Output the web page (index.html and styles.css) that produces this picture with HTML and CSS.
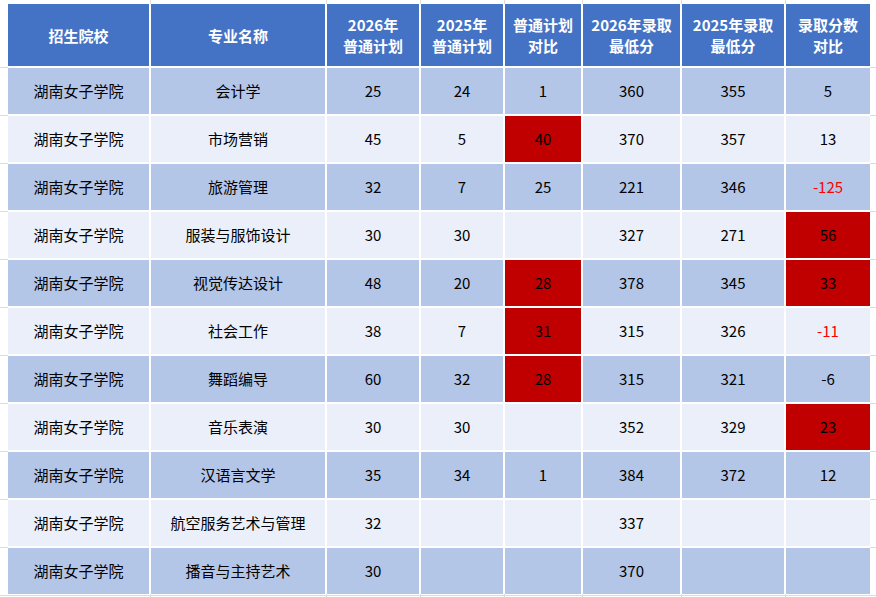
FILE: index.html
```html
<!DOCTYPE html>
<html lang="zh-CN">
<head>
<meta charset="utf-8">
<title>招生计划对比</title>
<link rel="stylesheet" href="styles.css">
</head>
<body>
<div class="sheet">
  <div class="grid">
    <div class="th">招生院校</div>
    <div class="th">专业名称</div>
    <div class="th">2026年<br>普通计划</div>
    <div class="th">2025年<br>普通计划</div>
    <div class="th">普通计划<br>对比</div>
    <div class="th">2026年录取<br>最低分</div>
    <div class="th">2025年录取<br>最低分</div>
    <div class="th">录取分数<br>对比</div>

    <div class="td d">湖南女子学院</div><div class="td d">会计学</div><div class="td d">25</div><div class="td d">24</div><div class="td d">1</div><div class="td d">360</div><div class="td d">355</div><div class="td d">5</div>

    <div class="td l">湖南女子学院</div><div class="td l">市场营销</div><div class="td l">45</div><div class="td l">5</div><div class="td r">40</div><div class="td l">370</div><div class="td l">357</div><div class="td l">13</div>

    <div class="td d">湖南女子学院</div><div class="td d">旅游管理</div><div class="td d">32</div><div class="td d">7</div><div class="td d">25</div><div class="td d">221</div><div class="td d">346</div><div class="td d neg">-125</div>

    <div class="td l">湖南女子学院</div><div class="td l">服装与服饰设计</div><div class="td l">30</div><div class="td l">30</div><div class="td l"></div><div class="td l">327</div><div class="td l">271</div><div class="td r">56</div>

    <div class="td d">湖南女子学院</div><div class="td d">视觉传达设计</div><div class="td d">48</div><div class="td d">20</div><div class="td r">28</div><div class="td d">378</div><div class="td d">345</div><div class="td r">33</div>

    <div class="td l">湖南女子学院</div><div class="td l">社会工作</div><div class="td l">38</div><div class="td l">7</div><div class="td r">31</div><div class="td l">315</div><div class="td l">326</div><div class="td l neg">-11</div>

    <div class="td d">湖南女子学院</div><div class="td d">舞蹈编导</div><div class="td d">60</div><div class="td d">32</div><div class="td r">28</div><div class="td d">315</div><div class="td d">321</div><div class="td d">-6</div>

    <div class="td l">湖南女子学院</div><div class="td l">音乐表演</div><div class="td l">30</div><div class="td l">30</div><div class="td l"></div><div class="td l">352</div><div class="td l">329</div><div class="td r">23</div>

    <div class="td d">湖南女子学院</div><div class="td d">汉语言文学</div><div class="td d">35</div><div class="td d">34</div><div class="td d">1</div><div class="td d">384</div><div class="td d">372</div><div class="td d">12</div>

    <div class="td l">湖南女子学院</div><div class="td l">航空服务艺术与管理</div><div class="td l">32</div><div class="td l"></div><div class="td l"></div><div class="td l">337</div><div class="td l"></div><div class="td l"></div>

    <div class="td d">湖南女子学院</div><div class="td d">播音与主持艺术</div><div class="td d">30</div><div class="td d"></div><div class="td d"></div><div class="td d">370</div><div class="td d"></div><div class="td d"></div>
  </div>
</div>
</body>
</html>
```

FILE: styles.css
```css
html, body {
  margin: 0;
  padding: 0;
  background: #ffffff;
}

.sheet {
  width: 876px;
  height: 597px;
  box-sizing: border-box;
  padding: 4px 6px 0 8px;
  overflow: hidden;
  background-color: #ffffff;
  background-image:
    linear-gradient(to right,
      transparent 150px, #dcdcdc 150px 151px, transparent 151px 326px,
      #dcdcdc 326px 327px, transparent 327px 420px,
      #dcdcdc 420px 421px, transparent 421px 504px,
      #dcdcdc 504px 505px, transparent 505px 582px,
      #dcdcdc 582px 583px, transparent 583px 681px,
      #dcdcdc 681px 682px, transparent 682px 785px,
      #dcdcdc 785px 786px, transparent 786px),
    linear-gradient(to bottom, #ffffff 0 66px, transparent 66px),
    linear-gradient(to bottom, #dcdcdc 0 1px, transparent 1px);
  background-size: 100% 100%, 100% 100%, 100% 48px;
  background-position: 0 0, 0 0, 0 19px;
  background-repeat: no-repeat, no-repeat, repeat;
  font-family: "Noto Sans CJK SC", "Microsoft YaHei", sans-serif;
  font-size: 15px;
  color: #000000;
}

.grid {
  display: grid;
  grid-template-columns: 141px 174px 92px 82px 76px 97px 102px 84px;
  grid-template-rows: 62px repeat(11, 46px);
  gap: 2px;
  background: #ffffff;
  width: 862px;
}

.th,
.td {
  display: flex;
  align-items: center;
  justify-content: center;
  text-align: center;
}

.th {
  background: #4472c4;
  color: #ffffff;
  font-weight: bold;
  line-height: 21px;
}

.td {
  line-height: 20px;
}

.d {
  background: #b4c6e7;
}

.l {
  background: #eaeff9;
}

.r {
  background: #c00000;
}

.neg {
  color: #ff0000;
}
```
